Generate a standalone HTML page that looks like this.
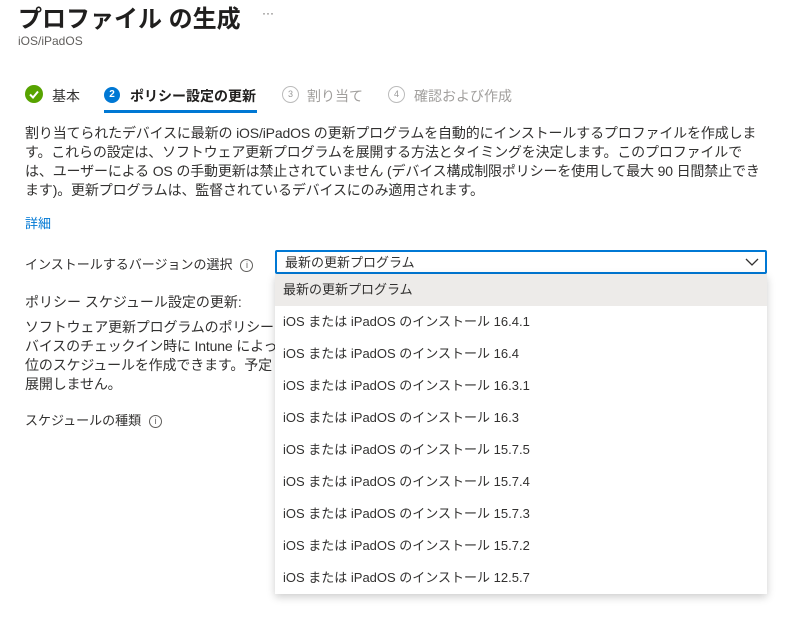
<!DOCTYPE html>
<html><head><meta charset="utf-8"><style>
body{margin:0;width:794px;height:617px;overflow:hidden;background:#fff;font-family:"Liberation Sans","Noto Sans CJK JP",sans-serif;color:#323130;position:relative}
.a{position:absolute;white-space:nowrap}
.p{font-size:14px;line-height:19px;letter-spacing:-0.15px}
.info{display:inline-block;width:11px;height:11px;border:1px solid #605e5c;border-radius:50%;font-size:9px;line-height:11px;text-align:center;color:#605e5c;vertical-align:middle;margin-left:8px}
.item{position:absolute;left:0;right:0;height:32px;line-height:32px;padding-left:8px;font-size:13px;color:#323130}
</style></head><body>
<div class="a" style="left:18px;top:-1px;font-size:24px;font-weight:bold;color:#201f1e">プロファイル の生成</div>
<div class="a" style="left:262px;top:6px;font-size:12px;color:#605e5c">···</div>
<div class="a" style="left:18px;top:34px;font-size:12px;color:#605e5c">iOS/iPadOS</div>

<div class="a" style="left:25px;top:85px;width:18px;height:18px;border-radius:50%;background:#57a300"><svg width="18" height="18"><path d="M5 9.5l3 3 5-6" stroke="#fff" stroke-width="2" fill="none"/></svg></div>
<div class="a" style="left:52px;top:86px;font-size:14px;">基本</div>
<div class="a" style="left:104px;top:87px;width:16px;height:16px;border-radius:50%;background:#0078d4;color:#fff;font-size:10px;font-weight:bold;text-align:center;line-height:16px">2</div>
<div class="a" style="left:130px;top:86px;font-size:14px;font-weight:bold;color:#201f1e">ポリシー設定の更新</div>
<div class="a" style="left:104px;top:110px;width:153px;height:3px;background:#0078d4"></div>
<div class="a" style="left:282px;top:86px;width:15px;height:15px;border-radius:50%;border:1px solid #bbb;color:#999;font-size:9px;text-align:center;line-height:15px">3</div>
<div class="a" style="left:307px;top:86px;font-size:14px;color:#a19f9d">割り当て</div>
<div class="a" style="left:388px;top:86px;width:15px;height:15px;border-radius:50%;border:1px solid #bbb;color:#999;font-size:9px;text-align:center;line-height:15px">4</div>
<div class="a" style="left:414px;top:86px;font-size:14px;color:#a19f9d">確認および作成</div>

<div class="a p" style="left:25px;top:124px;">割り当てられたデバイスに最新の iOS/iPadOS の更新プログラムを自動的にインストールするプロファイルを作成しま<br>す。これらの設定は、ソフトウェア更新プログラムを展開する方法とタイミングを決定します。このプロファイルで<br>は、ユーザーによる OS の手動更新は禁止されていません (デバイス構成制限ポリシーを使用して最大 90 日間禁止でき<br>ます)。更新プログラムは、監督されているデバイスにのみ適用されます。</div>
<div class="a" style="left:25px;top:213px;font-size:13px;color:#0078d4">詳細</div>
<div class="a" style="left:25px;top:254px;font-size:13px;">インストールするバージョンの選択<span class="info">i</span></div>
<div class="a" style="left:25px;top:292px;font-size:14px;">ポリシー スケジュール設定の更新:</div>
<div class="a p" style="left:25px;top:318px;">ソフトウェア更新プログラムのポリシー<br>バイスのチェックイン時に Intune によっ<br>位のスケジュールを作成できます。予定<br>展開しません。</div>
<div class="a" style="left:25px;top:410px;font-size:13px;">スケジュールの種類<span class="info">i</span></div>

<div class="a" style="left:275px;top:250px;width:488px;height:20px;border:2px solid #0078d4;border-radius:2px;font-size:13px;line-height:21px"><span style="margin-left:8px">最新の更新プログラム</span>
<svg style="position:absolute;right:6px;top:4px" width="14" height="12"><path d="M1 3l6 6 6-6" stroke="#323130" stroke-width="1.3" fill="none"/></svg></div>
<div class="a" style="left:275px;top:274px;width:492px;height:320px;background:#fff;box-shadow:0 3px 8px rgba(0,0,0,.2)">
<div class="item" style="top:0;background:#edebe9">最新の更新プログラム</div>
<div class="item" style="top:32px">iOS または iPadOS のインストール 16.4.1</div>
<div class="item" style="top:64px">iOS または iPadOS のインストール 16.4</div>
<div class="item" style="top:96px">iOS または iPadOS のインストール 16.3.1</div>
<div class="item" style="top:128px">iOS または iPadOS のインストール 16.3</div>
<div class="item" style="top:160px">iOS または iPadOS のインストール 15.7.5</div>
<div class="item" style="top:192px">iOS または iPadOS のインストール 15.7.4</div>
<div class="item" style="top:224px">iOS または iPadOS のインストール 15.7.3</div>
<div class="item" style="top:256px">iOS または iPadOS のインストール 15.7.2</div>
<div class="item" style="top:288px">iOS または iPadOS のインストール 12.5.7</div>
</div>
</body></html>
